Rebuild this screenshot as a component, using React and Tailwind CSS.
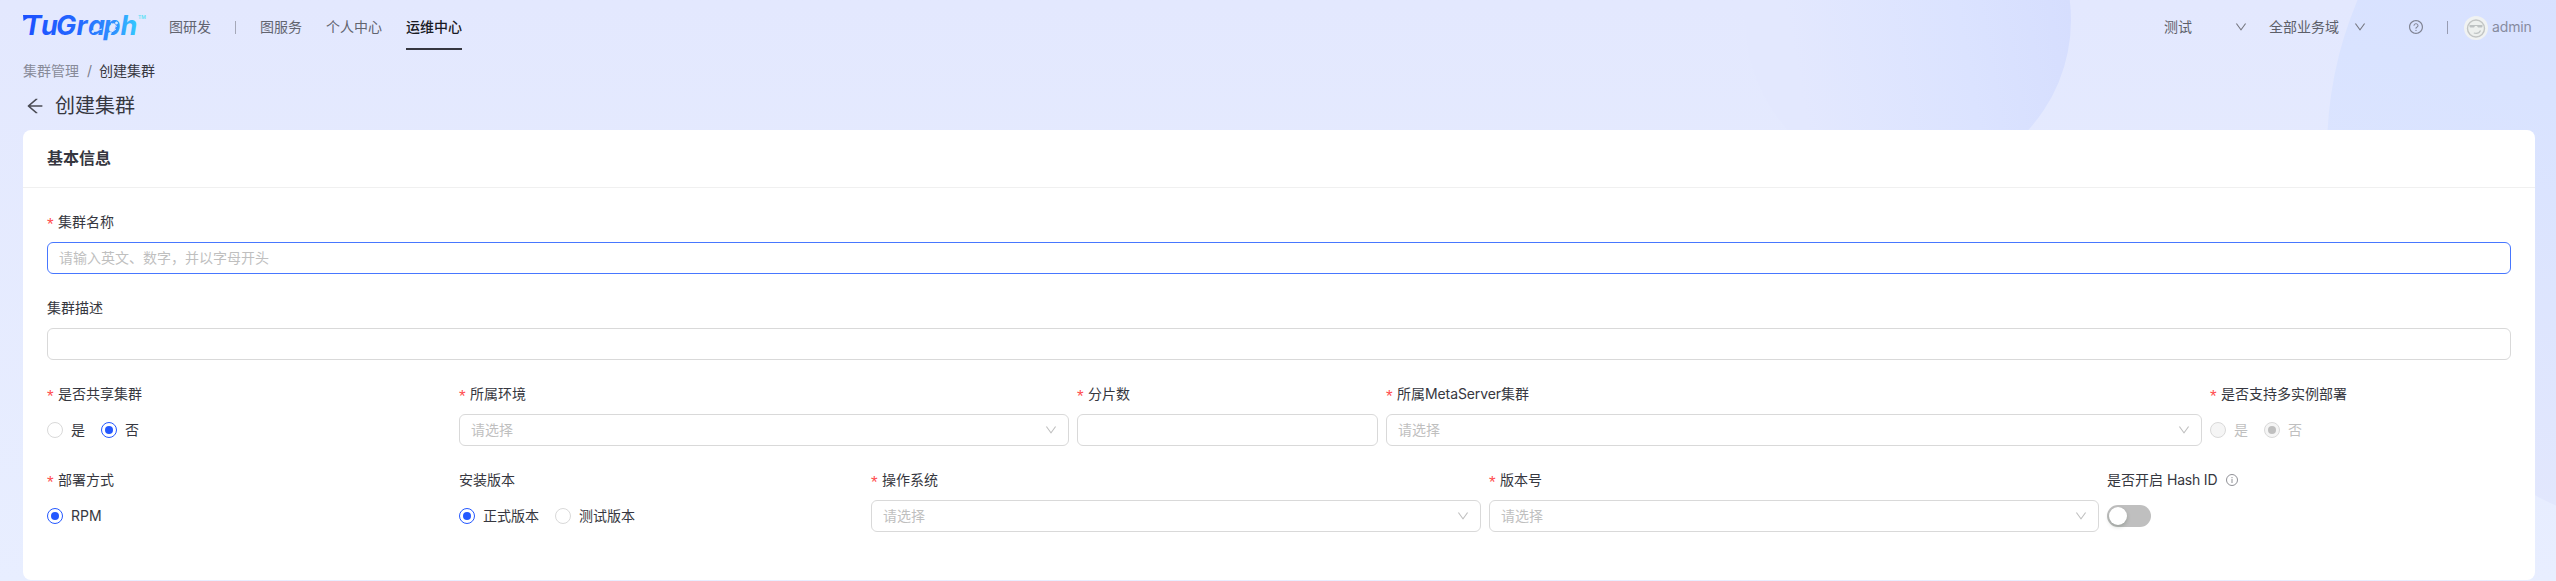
import React from "react";

const Chevron = ({ className = "" }) => (
  <svg viewBox="64 64 896 896" className={`h-3 w-3 shrink-0 ${className}`} fill="currentColor">
    <path d="M884 256h-75c-5.100 0-9.900 2.500-12.900 6.600L512 654.200 227.900 262.600c-3-4.100-7.800-6.600-12.900-6.600h-75c-6.500 0-10.300 7.400-6.500 12.700l352.600 486.100c12.800 17.600 39 17.600 51.700 0l352.600-486.100c3.900-5.300.1-12.700-6.400-12.700z" />
  </svg>
);

const Logo = () => (
  <svg width="124" height="50" viewBox="0 -10 124 50" className="shrink-0">
    <defs>
      <linearGradient id="brand" x1="0" y1="0" x2="124" y2="0" gradientUnits="userSpaceOnUse">
        <stop offset="0" stopColor="#1c50ff" />
        <stop offset="0.45" stopColor="#2468ff" />
        <stop offset="0.75" stopColor="#2f94ff" />
        <stop offset="0.93" stopColor="#34ccff" />
        <stop offset="1" stopColor="#55dcf8" />
      </linearGradient>
    </defs>
    <path d="M0 3h9l-8.500 6z" fill="url(#brand)" />
    <text
      y="22.500"
      x="0.500 18 33 53.500 65 80.500 97.500"
      fill="url(#brand)"
      className="font-['Inter',sans-serif] text-[27px] font-bold italic"
    >
      TuGraph
    </text>
    <g stroke="#dcecff" strokeWidth="0.900" fill="#dcecff">
      <path d="M70 19.500l9-2.500M86 22l7-5M88 11.500l6 3" fill="none" />
      <circle cx="70" cy="19.500" r="1" />
      <circle cx="93.500" cy="11" r="1" />
      <circle cx="87" cy="21.500" r="1" />
    </g>
    <text x="115" y="6.800" fill="#5fe0f5" className="font-['Inter',sans-serif] text-[5px] font-semibold">
      TM
    </text>
  </svg>
);

const Latin = ({ children }) => <span className="tracking-[-0.1px]">{children}</span>;

const Label = ({ required, children }) => (
  <div className="mb-[9px] -mt-px flex h-[22px] items-center whitespace-nowrap">
    {required && (
      <span className="mr-1 mt-[5px] w-[7px] font-['Liberation_Sans'] text-[17px] text-[#ff4d4f]">*</span>
    )}
    {children}
  </div>
);

const Field = ({ label, required, className, children }) => (
  <div className={className}>
    <Label required={required}>{label}</Label>
    {children}
  </div>
);

const box = "flex h-8 items-center rounded-md border px-[11px] pb-px";

const Select = () => (
  <div className={`${box} justify-between border-[#d9d9d9] text-[#bfbfbf]`}>
    <span>请选择</span>
    <Chevron />
  </div>
);

const Radio = ({ checked, disabled, children }) => (
  <span className={`flex items-center ${disabled ? "text-[#bfbfbf]" : ""}`}>
    <span
      className={`mr-2 flex h-4 w-4 items-center justify-center rounded-full border ${
        disabled ? "border-[#d9d9d9] bg-[#f5f5f5]" : checked ? "border-[#2458ff] bg-white" : "border-[#d9d9d9] bg-white"
      }`}
    >
      {checked && <span className={`h-2 w-2 rounded-full ${disabled ? "bg-[#bfbfbf]" : "bg-[#2458ff]"}`} />}
    </span>
    {children}
  </span>
);

const RadioGroup = ({ children }) => <div className="flex h-8 items-center gap-4">{children}</div>;

const Header = () => (
  <header className="flex h-[54px] items-center pl-[23px] pr-[26px] text-[#62646f]">
    <Logo />
    <nav className="ml-[22px] flex h-[46px] items-center">
      <span>图研发</span>
      <span className="mx-6 h-[13px] w-px bg-[#a5a8b8]" />
      <span>图服务</span>
      <span className="ml-6">个人中心</span>
      <span className="ml-6 flex h-[46px] items-center border-b-2 border-[#363740] pt-0.5 font-medium text-[#1a1b25]">
        运维中心
      </span>
    </nav>
    <div className="ml-auto flex items-center">
      <span className="text-[#5d5f69]">测试</span>
      <Chevron className="ml-[43px] text-[#74767f]" />
      <span className="ml-[22px] text-[#5d5f69]">全部业务域</span>
      <Chevron className="ml-[15px] text-[#74767f]" />
      <svg viewBox="64 64 896 896" className="ml-[43px] h-3.5 w-3.5" fill="#808494">
        <path d="M512 64C264.600 64 64 264.600 64 512s200.600 448 448 448 448-200.600 448-448S759.400 64 512 64zm0 820c-205.400 0-372-166.600-372-372s166.600-372 372-372 372 166.600 372 372-166.600 372-372 372z" />
        <path d="M623.600 316.700C593.600 290.400 554 276 512 276s-81.600 14.500-111.600 40.700C369.200 344 352 380.700 352 420v7.600c0 4.400 3.600 8 8 8h48c4.400 0 8-3.600 8-8V420c0-44.100 43.100-80 96-80s96 35.900 96 80c0 31.100-22 59.600-56.100 72.700-21.200 8.100-39.200 22.300-52.100 40.900-13.100 19-19.900 41.800-19.900 64.900V620c0 4.400 3.600 8 8 8h48c4.400 0 8-3.600 8-8v-22.700a48.300 48.300 0 0 1 30.900-44.800c59-22.700 97.100-74.700 97.100-132.500.1-39.300-17.100-76-48.300-103.300zM472 732a40 40 0 1 0 80 0 40 40 0 1 0-80 0z" />
      </svg>
      <span className="ml-6 h-[13px] w-px bg-[#989cb2]" />
      <svg width="24" height="24" viewBox="0 0 24 24" className="ml-4 mt-0.5">
        <circle cx="12" cy="12" r="12" fill="#f0f2f2" />
        <circle cx="12" cy="12.500" r="8.500" fill="#edf0ee" stroke="#c2c5c4" strokeWidth="1.400" />
        <path d="M5.500 9h13v1.500a1 1 0 0 1-1 1h-3.500l-1-1.500h-2l-1 1.500h-3.500a1 1 0 0 1-1-1z" fill="#bdc2c2" />
        <path d="M9.800 17c3 1 5.500 0 6.700-2.500" fill="none" stroke="#bdc2c2" strokeWidth="1.200" />
      </svg>
      <span className="ml-1 w-[38px] tracking-[-0.15px] text-[#878b9f]">admin</span>
    </div>
  </header>
);

export default function App() {
  return (
    <div className="relative h-[581px] w-full overflow-hidden bg-linear-to-b from-[#e3e8fe] to-[#e8eeff] font-['Inter','Noto_Sans_CJK_SC',sans-serif] text-sm leading-[22px] text-[#363740]">
      <svg className="absolute inset-0 h-full w-full">
        <defs>
          <linearGradient id="orbA" x1="0.15" y1="0.600" x2="1" y2="0.450">
            <stop offset="0" stopColor="#e3e8fe" />
            <stop offset="0.6" stopColor="#dbe3ff" />
            <stop offset="1" stopColor="#d6defe" />
          </linearGradient>
          <linearGradient id="orbB" x1="0.200" y1="0.950" x2="0.400" y2="0.100">
            <stop offset="0" stopColor="#e2e7fd" />
            <stop offset="0.6" stopColor="#d9e3ff" />
            <stop offset="1" stopColor="#d7deff" />
          </linearGradient>
        </defs>
        <circle cx="1908" cy="20" r="163" fill="url(#orbA)" />
        <circle cx="2716" cy="151" r="389" fill="url(#orbB)" />
      </svg>

      <div className="relative">
        <Header />
        <div className="flex h-[34px] items-center gap-2 pl-[23px]">
          <span className="text-[#888b99]">集群管理</span>
          <span className="w-1 text-[#7b7d8b]">/</span>
          <span>创建集群</span>
        </div>
        <div className="flex h-[42px] items-center pb-[6px] pl-[26px] text-xl">
          <svg viewBox="64 64 896 896" className="mr-[11px] h-[18px] w-[18px]" fill="#4a4b54">
            <path d="M872 474H286.900l350.200-304c5.600-4.900 2.200-14-5.200-14h-88.500c-3.900 0-7.600 1.400-10.500 3.900L155 487.800a31.960 31.960 0 0 0 0 48.300L535.100 866c1.500 1.300 3.300 2 5.200 2h91.500c7.400 0 10.800-9.200 5.200-14L286.900 550H872c4.400 0 8-3.600 8-8v-60c0-4.400-3.600-8-8-8z" />
          </svg>
          创建集群
        </div>

        <main className="ml-[23px] mr-[21px] h-[450px] rounded-lg bg-white">
          <div className="flex h-[58px] items-center border-b border-[#f0f0f0] pb-0.5 pl-6 text-base font-semibold">
            基本信息
          </div>
          <div className="flex flex-col gap-6 px-6 pt-6">
            <Field label="集群名称" required>
              <div className={`${box} border-[#4777ff] text-[#bfbfbf]`}>请输入英文、数字，并以字母开头</div>
            </Field>
            <Field label="集群描述">
              <div className={`${box} border-[#d9d9d9]`} />
            </Field>
            <div className="grid grid-cols-24 gap-x-2">
              <Field label="是否共享集群" required className="col-span-4">
                <RadioGroup>
                  <Radio>是</Radio>
                  <Radio checked>否</Radio>
                </RadioGroup>
              </Field>
              <Field label="所属环境" required className="col-span-6">
                <Select />
              </Field>
              <Field label="分片数" required className="col-span-3">
                <div className={`${box} border-[#d9d9d9]`} />
              </Field>
              <Field
                label={
                  <>
                    所属<Latin>MetaServer</Latin>集群
                  </>
                }
                required
                className="col-span-8"
              >
                <Select />
              </Field>
              <Field label="是否支持多实例部署" required className="col-span-3">
                <RadioGroup>
                  <Radio disabled>是</Radio>
                  <Radio disabled checked>
                    否
                  </Radio>
                </RadioGroup>
              </Field>
            </div>
            <div className="grid grid-cols-24 gap-x-2">
              <Field label="部署方式" required className="col-span-4">
                <RadioGroup>
                  <Radio checked>RPM</Radio>
                </RadioGroup>
              </Field>
              <Field label="安装版本" className="col-span-4">
                <RadioGroup>
                  <Radio checked>正式版本</Radio>
                  <Radio>测试版本</Radio>
                </RadioGroup>
              </Field>
              <Field label="操作系统" required className="col-span-6">
                <Select />
              </Field>
              <Field label="版本号" required className="col-span-6">
                <Select />
              </Field>
              <Field
                className="col-span-4"
                label={
                  <>
                    是否开启<span className="ml-1 tracking-[-0.2px]">Hash ID</span>
                    <svg width="12" height="12" viewBox="0 0 12 12" className="ml-[9px]" fill="none" stroke="#8f9096">
                      <circle cx="6" cy="6" r="5.500" />
                      <path d="M6 5v4M6 3v1.200" />
                    </svg>
                  </>
                }
              >
                <div className="mt-3.5 flex h-[22px] w-11 items-center rounded-full bg-[#bfbfbf] px-0.5">
                  <span className="h-[18px] w-[18px] rounded-full bg-white shadow-[0_2px_4px_rgba(0,35,11,0.2)]" />
                </div>
              </Field>
            </div>
          </div>
        </main>
      </div>
    </div>
  );
}
